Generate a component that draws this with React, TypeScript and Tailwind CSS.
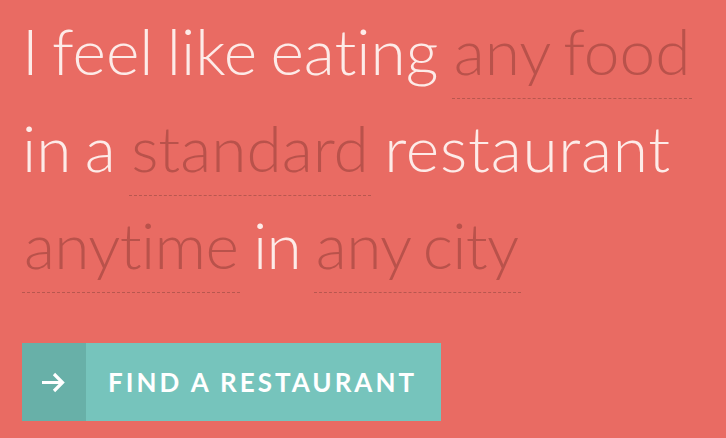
import React from "react";

function Choice({ children, className = "" }: { children: React.ReactNode; className?: string }) {
  return (
    <span className={`text-[#b9524b] border-b border-dashed border-[#b8574f] pb-[9px] px-[2px] ${className}`}>
      {children}
    </span>
  );
}

export default function App() {
  return (
    <div
      className="w-[726px] h-[438px] bg-[#e96b63] overflow-hidden pl-[22px] pt-[2px]"
      style={{ fontFamily: "Lato, 'Open Sans', sans-serif" }}
    >
      <p className="text-[64px] leading-[97px] font-light text-[#fdebe8] [word-spacing:-4px] [font-variant-ligatures:none]">
        I feel like eating <Choice>any food</Choice>
        <br />
        in a <Choice>standard</Choice> <span className="tracking-[0.012em]">restaurant</span>
        <br />
        <span className="tracking-[-0.01em]">
          <Choice>anytime</Choice> in <Choice>any city</Choice>
        </span>
      </p>
      <button className="mt-[50px] flex h-[78px] w-[419px] bg-[#76c4bc] text-white">
        <span className="flex w-[64px] h-full items-center justify-center bg-[#68b0a8] pr-[3px]">
          <svg width="24" height="21" viewBox="0 0 24 21" fill="none">
            <path
              d="M1 10.5H21.5M13 2L21.5 10.5L13 19"
              stroke="white"
              strokeWidth="3.2"
            />
          </svg>
        </span>
        <span className="flex-1 flex items-center pl-[22px] text-[26px] font-bold tracking-[0.115em] uppercase">
          Find a Restaurant
        </span>
      </button>
    </div>
  );
}
